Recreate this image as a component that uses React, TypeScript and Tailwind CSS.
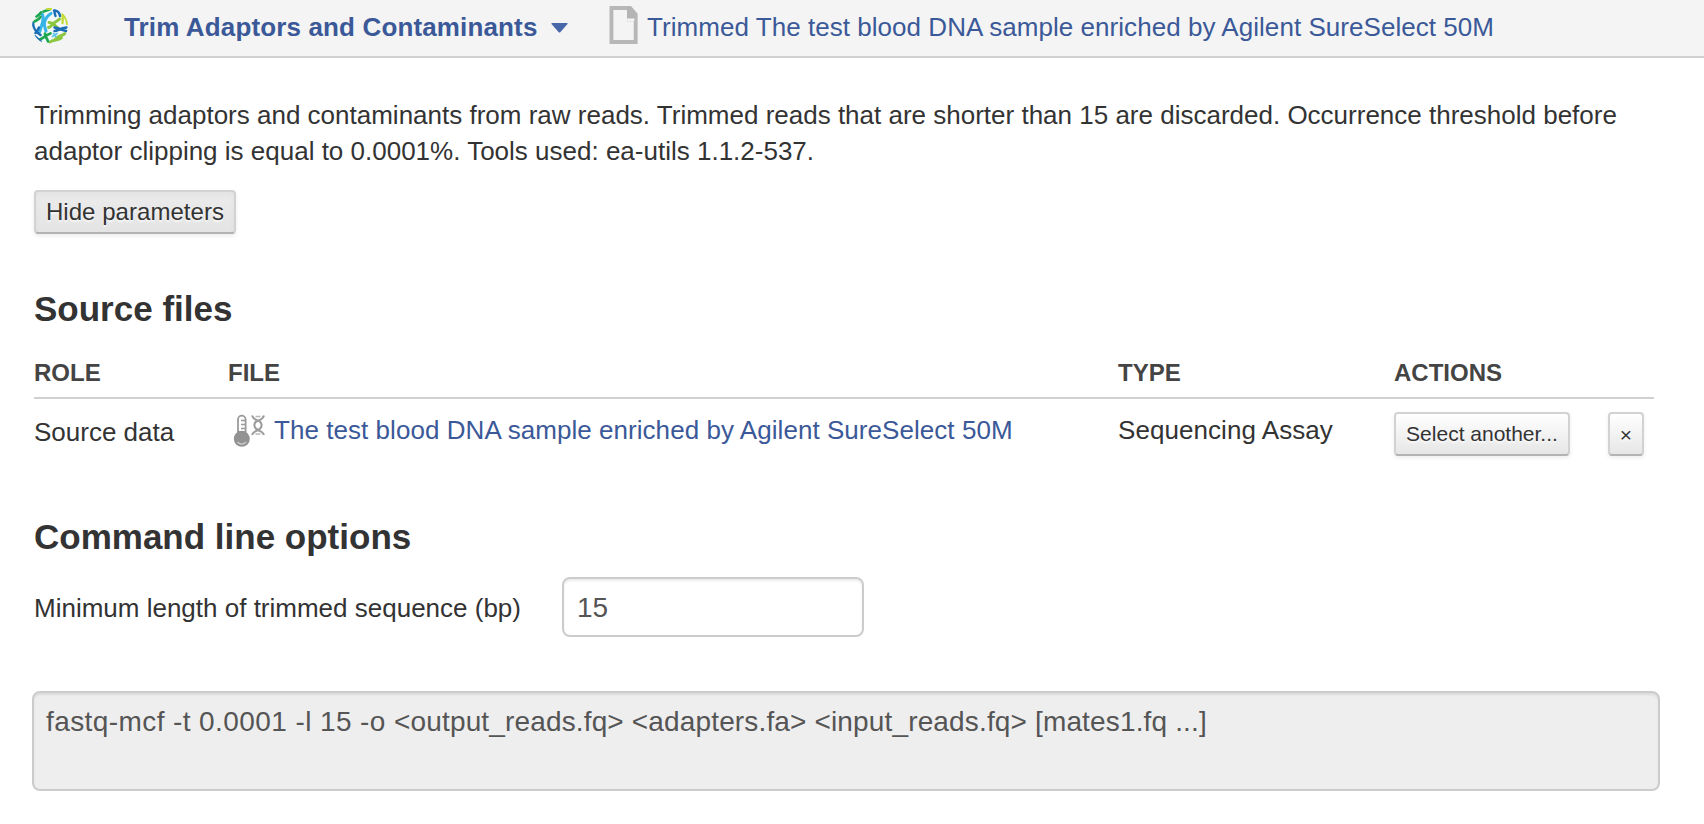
import React from "react";

function Logo() {
  return (
    <svg width="36" height="36" viewBox="0 0 36 36" fill="none" strokeLinecap="round" strokeLinejoin="round">
      <defs>
        <clipPath id="disc">
          <circle cx="18" cy="18" r="18" />
        </clipPath>
      </defs>
      <g clipPath="url(#disc)">
        <circle cx="18" cy="18" r="18" fill="#f2f8f8" />
        <g stroke="#36b4e8" strokeWidth="3.100">
          <path d="M10.200 6C11.500 9 11.500 12 10.500 15S8.500 20 7.800 23.500" />
          <path d="M19 5.500C15.500 7.500 13.500 10.500 12.500 14S13 20 14 23" />
        </g>
        <g stroke="#8cc63f" strokeWidth="2.900">
          <path d="M27.500 11C25.500 13 23.500 13.500 21.500 15.500S18.500 19 16.500 19.500" />
          <path d="M17 14.500C19 14.500 20.500 15.500 22 16.500S24 19.500 26 20" />
          <path d="M18 34C21 31.500 26 32.500 29.500 30" />
          <path d="M23.500 31C26.500 27.500 29 28.500 33 25.500" />
        </g>
        <g stroke="#1d6db5" strokeWidth="2.500">
          <path d="M22.500 23C26 22.500 28 20.500 34.500 19.500" />
          <path d="M22.500 19.500C26.500 20 29 22 34.500 23" />
          <path d="M1 14.500C1 20 3 23 8.500 27" />
          <path d="M7 19.500C5.500 22 5.500 23 3.500 25" />
          <path d="M22 2.500C23 4 22.500 6 23.500 8" />
          <path d="M23 2.500C26.500 3 27.500 5 28 8" />
        </g>
        <g stroke="#1fa651" strokeWidth="2.700">
          <path d="M7.500 31.500C11 30.500 13 27.500 18.500 25.500" />
          <path d="M13 25.500C12.500 28.500 15.500 30.500 16 33.500" />
          <path d="M2.500 13.500C4.500 12 6 12.500 8.500 9" />
          <path d="M4.500 8.500C6 7.500 7.500 7 9 4.500" />
          <path d="M11.500 3.500L17.500 1.500" />
        </g>
        <g stroke="#c3db30" strokeWidth="2.300">
          <path d="M30.500 6.500C30.500 9.500 31 12 30.500 15" />
          <path d="M31.500 7.500C34 10 35 13 35 16" />
          <path d="M15 .8h4" />
        </g>
        <g stroke="#5cc3ea" strokeWidth="1.700">
          <path d="M20.500 28.500L25 25.500M21.500 25.500L24 28.500" />
        </g>
        <path d="M3 28l6 5.500" stroke="#1d6db5" strokeWidth="2" />
      </g>
    </svg>
  );
}

function FileIcon() {
  return (
    <svg width="29" height="38" viewBox="0 0 29 38">
      <path fillRule="evenodd" d="M0 0h21.500L29 7.500V38H0ZM4 4v30h21V15.500h-7V4Z" transform="translate(.5 0) scale(.97 1)" fill="#b7b7b7" />
      <path d="M18 4h4l3 4v7.500h-7Z" transform="translate(.5 -3.500)" fill="#b4b4b4" />
      <path d="M18 12h7v3.500h-7Z" transform="translate(.2 0)" fill="#f4f4f4" />
      <path d="M18.500 10h6v2.500h-6Z" fill="#b4b4b4" />
    </svg>
  );
}

function AssayIcon() {
  return (
    <svg width="32" height="34" viewBox="0 0 32 34" fill="none">
      <path d="M5 19V5.500a3.800 3.800 0 0 1 7.600 0V19" stroke="#9b9b9b" strokeWidth="1.800" />
      <path d="M8 6.500h4M8 10.500h4M8 14.500h4" stroke="#999" strokeWidth="1.300" />
      <path d="M4.500 17h8.500v3H4.500Z" fill="#929292" />
      <circle cx="8.800" cy="24.800" r="8" fill="#929292" />
      <path d="M4.500 28a5.500 5.500 0 0 0 8.600 0" stroke="#c4c4c4" strokeWidth="1.700" />
      <path
        d="M19 1.500c1.500 4.500 4 4 7 5.500s4 6 0 8.500-5.500 1.500-7 5.500M31 1.500c-1.500 4.500-4 4-7 5.500s-4 6 0 8.500 5.500 1.500 7 5.500"
        stroke="#9d9d9d"
        strokeWidth="2.100"
      />
      <path d="M22.500 2.500h5M22.500 20h5" stroke="#b8b8b8" strokeWidth="1.300" />
    </svg>
  );
}

const button =
  "flex h-11 items-center justify-center rounded-[4px] border-2 border-[#d2d2d2] border-b-[#b3b3b3] text-[#333] [text-shadow:0_2px_2px_rgba(255,255,255,0.75)]";

export default function App() {
  return (
    <div className="flex h-[824px] w-[1704px] flex-col overflow-hidden bg-white font-['Liberation_Sans',Arial,sans-serif] text-[26px] leading-9 text-[#333]">
      <header className="flex h-[58px] shrink-0 border-b-2 border-[#d0d0d0] bg-[#f4f4f4] pl-8 text-[#3b5998]">
        <div className="w-[92px] pt-2">
          <Logo />
        </div>
        <div className="flex w-[485px] pt-[9px]">
          <span className="w-[427px] font-bold tracking-[0.14px] whitespace-nowrap">Trim Adaptors and Contaminants</span>
          <svg className="mt-[14px]" width="17" height="10" viewBox="0 0 17 10">
            <path d="M1 0h15q1 0 .5 1L9.500 9q-1 1-2 0L.5 1Q0 0 1 0Z" fill="#4767a8" />
          </svg>
        </div>
        <div className="w-[38px] pt-1.5">
          <FileIcon />
        </div>
        <span className="pt-[9px] tracking-[0.045px] whitespace-nowrap">
          Trimmed The test blood DNA sample enriched by Agilent SureSelect 50M
        </span>
      </header>

      <main className="flex flex-col pl-[34px]">
        <p className="mt-[39px] whitespace-nowrap">
          Trimming adaptors and contaminants from raw reads. Trimmed reads that are shorter than 15 are discarded. Occurrence threshold before
          <br />
          adaptor clipping is equal to 0.0001%. Tools used: ea-utils 1.1.2-537.
        </p>
        <button
          className={`${button} mt-[21px] w-[202px] bg-linear-to-b from-[#ececec] to-[#e4e4e4] text-[24px] shadow-[inset_0_4px_6px_rgba(0,0,0,0.04),0_2px_4px_rgba(0,0,0,0.08)]`}
        >
          <span className="tracking-[0.05px] whitespace-nowrap">Hide parameters</span>
        </button>

        <h2 className="mt-[55px] h-10 text-[35px] leading-10 font-bold whitespace-nowrap">Source files</h2>

        <section className="mt-[19px] w-[1620px]">
          <div className="grid h-[51px] grid-cols-[194px_890px_276px_260px] border-b-2 border-[#d0d0d0] pt-[7px] text-[24px] font-bold text-[#444]">
            <span>ROLE</span>
            <span>FILE</span>
            <span>TYPE</span>
            <span>ACTIONS</span>
          </div>
          <div className="grid h-[74px] grid-cols-[194px_890px_276px_260px] whitespace-nowrap">
            <span className="pt-[15px]">Source data</span>
            <div className="flex pl-[5px]">
              <div className="w-[41px] pt-[15px]">
                <AssayIcon />
              </div>
              <a className="pt-[13px] tracking-[0.05px] text-[#3b5998]">The test blood DNA sample enriched by Agilent SureSelect 50M</a>
            </div>
            <span className="pt-[13px] tracking-[0.06px]">Sequencing Assay</span>
            <div className="flex gap-[38px] pt-[13px] text-[21px]">
              <button
                className={`${button} w-[176px] bg-linear-to-b from-white to-[#e6e6e6] shadow-[0_2px_4px_rgba(0,0,0,0.07)]`}
              >
                Select another...
              </button>
              <button
                className={`${button} w-[36px] bg-linear-to-b from-white to-[#e6e6e6] pt-0.5 shadow-[0_2px_4px_rgba(0,0,0,0.07)]`}
              >
                ×
              </button>
            </div>
          </div>
        </section>

        <h2 className="mt-11 h-10 text-[35px] leading-10 font-bold whitespace-nowrap">Command line options</h2>

        <div className="mt-5 flex h-[60px]">
          <label className="w-[528px] pt-[13px]">Minimum length of trimmed sequence (bp)</label>
          <input
            className="h-[60px] w-[302px] rounded-[8px] border-2 border-[#ccc] pt-0.5 pr-3 pl-[13px] text-[28px] text-[#555] shadow-[inset_0_2px_2px_rgba(0,0,0,0.075)]"
            defaultValue="15"
          />
        </div>

        <div className="mt-[54px] -ml-0.5 h-[100px] w-[1628px] rounded-[8px] border-2 border-[#ccc] bg-[#eee] px-3 pt-[9px] text-[28px] leading-10 whitespace-nowrap text-[#555] shadow-[inset_0_2px_2px_rgba(0,0,0,0.075)]">
          <span className="tracking-[0.41px]">{"fastq-mcf -t 0.0001 -l 15 -o "}</span>
          <span className="tracking-[0.15px]">{"<output_reads.fq> <adapters.fa> <input_reads.fq> [mates1.fq ...]"}</span>
        </div>
      </main>
    </div>
  );
}
